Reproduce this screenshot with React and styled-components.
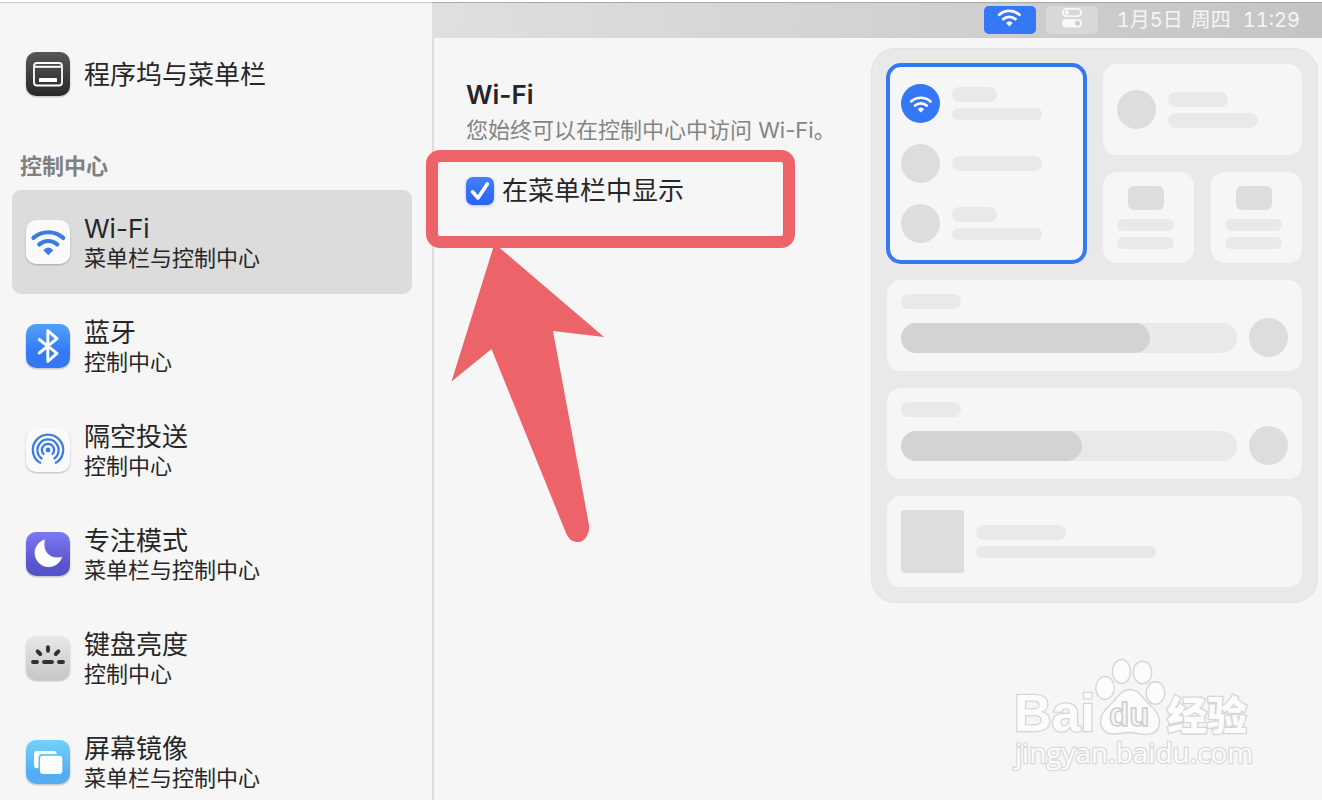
import * as React from "react";
import styled, { createGlobalStyle } from "styled-components";

const GlobalStyle = createGlobalStyle`
  * {
    box-sizing: border-box;
  }

  body {
    margin: 0;
    background-color: #f6f6f6;
    color: #262626;
    font-family: "Inter", "Noto Sans CJK SC", sans-serif;
  }
`;

const Window = styled.div`
  height: 100vh;
  display: flex;
  overflow: hidden;
  border-top: 2px solid #ffffff;
  background-color: #f6f6f6;
`;

const Sidebar = styled.nav`
  width: 434px;
  flex-shrink: 0;
  padding: 19px 20px 0 12px;
  border-top: 1px solid #cccccc;
  border-right: 2px solid #dcdcdc;
`;

const SectionTitle = styled.h2`
  margin: 0;
  padding: 25px 8px 9px;
  color: #808080;
  font-size: 22px;
  font-weight: 700;
  line-height: 30px;
`;

const Item = styled.button`
  width: 100%;
  height: 104px;
  display: flex;
  align-items: center;
  gap: 14px;
  padding: 0 14px;
  border: 0;
  border-radius: 9px;
  background-color: ${({ $selected }) => ($selected ? "#dcdcdc" : "transparent")};
  color: inherit;
  font-family: inherit;
  text-align: left;
`;

const ItemIcon = styled.span`
  width: 44px;
  height: 44px;
  flex-shrink: 0;
  border-radius: 10px;
  background: ${({ $fill }) => $fill};
  box-shadow: 0 1px 2px rgba(0, 0, 0, 0.25);
  color: #3a7ce0;

  svg {
    display: block;
  }
`;

const ItemText = styled.span`
  display: flex;
  flex-direction: column;
  padding-top: 2px;
`;

const ItemTitle = styled.span`
  font-size: 26px;
  line-height: 30px;
`;

const ItemSubtitle = styled.span`
  font-size: 22px;
  line-height: 28px;
`;

const Main = styled.main`
  flex: 1;
  min-width: 0;
  position: relative;
`;

const MenuBar = styled.header`
  height: 36px;
  margin-left: -2px;
  display: flex;
  align-items: flex-start;
  justify-content: flex-end;
  gap: 10px;
  padding: 3px 22px 0 0;
  border-top: 1px solid #a8a8a8;
  background: linear-gradient(100deg, #dfdfdf, #d2d2d2 50%, #c4c4c4);
`;

const MenuButton = styled.button`
  width: 52px;
  height: 28px;
  display: flex;
  align-items: flex-start;
  justify-content: center;
  padding: 2px 0 0;
  border: 0;
  border-radius: 5px;
  background-color: ${({ $active }) => ($active ? "#3478f6" : "#d8d8d8")};
  color: #f8f8f8;
`;

const Clock = styled.time`
  display: flex;
  gap: 8px;
  margin-left: 9px;
  color: #f6f6f6;
  font-size: 20px;
  font-variant-numeric: tabular-nums;
  line-height: 28px;
`;

const ClockTime = styled.span`
  margin-left: 4px;
`;

const Content = styled.div`
  display: flex;
  align-items: flex-start;
  justify-content: space-between;
  padding: 10px 4px 0 32px;
`;

const Settings = styled.section`
  padding-top: 32px;
`;

const Title = styled.h1`
  margin: 0;
  font-size: 26px;
  font-weight: 600;
  line-height: 30px;
`;

const Description = styled.p`
  margin: 6px 0 32px;
  color: #848484;
  font-size: 22px;
  line-height: 28px;
`;

const CheckRow = styled.div`
  position: relative;
  display: flex;
  align-items: center;
  gap: 8px;
`;

const CheckLabel = styled.label`
  font-size: 26px;
  line-height: 30px;
`;

const CheckBox = styled.span`
  display: grid;

  > * {
    grid-area: 1 / 1;
  }

  svg {
    pointer-events: none;
  }

  input:not(:checked) + svg {
    visibility: hidden;
  }
`;

const CheckInput = styled.input`
  appearance: none;
  width: 28px;
  height: 28px;
  margin: 0;
  border: 1px solid #c4c4c4;
  border-radius: 7px;
  background-color: #ffffff;

  &:checked {
    border: 0;
    background: linear-gradient(#4380f8, #2a62f5);
    box-shadow: 0 1px 3px rgba(42, 98, 245, 0.35);
  }
`;

const Highlight = styled.div`
  position: absolute;
  top: -26px;
  left: -40px;
  width: 369px;
  height: 98px;
  border: 12px solid #ec646a;
  border-radius: 14px;
  pointer-events: none;
`;

const Arrow = styled.svg`
  position: absolute;
  top: 64px;
  left: -16px;
  pointer-events: none;
`;

const Panel = styled.aside`
  width: 447px;
  flex-shrink: 0;
  display: grid;
  grid-template-columns: repeat(4, 1fr);
  grid-auto-rows: 91px;
  gap: 17px;
  padding: 15px;
  border: 1px solid #e3e3e3;
  border-radius: 24px;
  background-color: #e9e9e9;
`;

const Card = styled.div`
  grid-column: span ${({ $cols }) => $cols};
  grid-row: span ${({ $rows }) => $rows || 1};
  display: flex;
  flex-direction: ${({ $column }) => ($column ? "column" : "row")};
  align-items: ${({ $column }) => ($column ? "stretch" : "center")};
  gap: ${({ $gap }) => $gap || 12}px;
  padding: 14px;
  border-radius: 14px;
  background-color: #f6f6f6;
`;

const SelectedCard = styled(Card)`
  justify-content: center;
  margin: -1px;
  padding: 11px;
  border: 4px solid #3478f6;
  border-radius: 15px;
`;

const CardRow = styled.div`
  display: flex;
  align-items: center;
  gap: 12px;
`;

const Lines = styled.div`
  display: flex;
  flex-direction: column;
  align-items: ${({ $center }) => ($center ? "center" : "flex-start")};
  gap: 6px;
`;

const Bar = styled.div`
  width: ${({ $width }) => $width}px;
  height: ${({ $thin }) => ($thin ? 12 : 15)}px;
  border-radius: 8px;
  background-color: #e9e9e9;
`;

const Dot = styled.div`
  width: 39px;
  height: 39px;
  flex-shrink: 0;
  display: flex;
  align-items: center;
  justify-content: center;
  border-radius: 50%;
  background-color: ${({ $active }) => ($active ? "#3478f6" : "#dddddd")};
  color: #ffffff;
`;

const Tile = styled.div`
  width: 36px;
  height: 24px;
  margin-bottom: 3px;
  border-radius: 6px;
  background-color: #dddddd;
`;

const Cover = styled.div`
  width: 63px;
  height: 63px;
  border-radius: 3px;
  background-color: #dddddd;
`;

const Track = styled.div`
  flex: 1;
  height: 30px;
  border-radius: 15px;
  background-color: #e9e9e9;
`;

const TrackFill = styled.div`
  height: 100%;
  border-radius: 15px;
  background-color: #d3d3d3;
`;

const Watermark = styled.svg`
  position: absolute;
  right: 62px;
  bottom: 20px;
  pointer-events: none;
`;

const WifiIcon = ({ width, height, viewBox = "4 8 37 28" }) => (
  <svg
    width={width}
    height={height}
    viewBox={viewBox}
    fill="none"
    stroke="currentColor"
    strokeWidth="4.2"
    strokeLinecap="round"
  >
    <path d="M7.4 17.9A22.5 22.5 0 0 1 37.2 17.9" />
    <path d="M13.3 24.4A13.6 13.6 0 0 1 31.3 24.4" />
    <path d="M22.3 35.2L17.3 30.2Q22.3 25 27.3 30.2Z" fill="currentColor" stroke="none" />
  </svg>
);

const TogglesIcon = () => (
  <svg width="20" height="20" viewBox="0 0 20 20">
    <rect x="0.9" y="0.9" width="18.2" height="7.2" rx="3.6" fill="none" stroke="currentColor" strokeWidth="1.8" />
    <circle cx="5" cy="4.5" r="2.3" fill="currentColor" />
    <rect x="0" y="11" width="20" height="8.6" rx="4.3" fill="currentColor" />
    <circle cx="15.5" cy="15.3" r="2.5" fill="#cfcfcf" />
  </svg>
);

const DockIcon = () => (
  <svg width="44" height="44" fill="none" stroke="#ffffff" strokeWidth="1.8">
    <rect x="8" y="11" width="28" height="22.5" rx="3" />
    <path d="M8 14.8H36" strokeWidth="2" />
    <rect x="13" y="26" width="18" height="4" rx="0.6" fill="#ffffff" stroke="none" />
  </svg>
);

const BluetoothIcon = () => (
  <svg width="44" height="44" fill="none" stroke="#ffffff" strokeWidth="2.9" strokeLinecap="round" strokeLinejoin="round">
    <path d="M13.3 15.5L31 29.3L21.8 37.3V6.7L31 14.7L13.3 29" />
  </svg>
);

const AirDropIcon = () => (
  <svg width="44" height="44" fill="none" stroke="#3a7ce0" strokeWidth="2.3">
    <circle cx="22" cy="22" r="2.4" fill="#3a7ce0" stroke="none" />
    <path d="M15 35.3A15.2 15.2 0 1 1 29 35.3" />
    <path d="M16.3 31A10.6 10.6 0 1 1 27.7 31" />
    <path d="M18.2 26.7A6.1 6.1 0 1 1 25.8 26.7" />
  </svg>
);

const MoonIcon = () => (
  <svg width="44" height="44">
    <path
      d="M18.6 7.8A13.8 13.8 0 1 0 35.8 25.3C29 26.6 25 25.3 21.6 21.8C18.2 18.2 17.4 13.5 18.6 7.8Z"
      fill="#ffffff"
      stroke="#ffffff"
      strokeWidth="0.6"
      strokeLinejoin="round"
    />
  </svg>
);

const BacklightIcon = () => (
  <svg width="44" height="44" fill="none" stroke="#303030" strokeWidth="3.9" strokeLinecap="round">
    <path d="M7 26H11M18 26H26M33 26H37" />
    <path d="M22 11.2V14.8M11.6 15.4L14.2 18M32.4 15.4L29.8 18" />
  </svg>
);

const MirrorIcon = () => (
  <svg width="44" height="44" fill="#ffffff">
    <path d="M11 11H28Q30.4 11 30.7 14H16Q12.5 14 12.5 17.5V28.3H11Q8 28.3 8 25.3V14Q8 11 11 11Z" />
    <rect x="14" y="15.7" width="22.3" height="18.3" rx="3" />
  </svg>
);

const controlItems = [
  {
    title: "Wi-Fi",
    subtitle: "菜单栏与控制中心",
    fill: "#fafafa",
    icon: <WifiIcon width={44} height={44} viewBox="0 0 44 44" />,
    selected: true
  },
  {
    title: "蓝牙",
    subtitle: "控制中心",
    fill: "linear-gradient(#52a0f8, #3478f6 65%)",
    icon: <BluetoothIcon />
  },
  {
    title: "隔空投送",
    subtitle: "控制中心",
    fill: "#fafafa",
    icon: <AirDropIcon />
  },
  {
    title: "专注模式",
    subtitle: "菜单栏与控制中心",
    fill: "linear-gradient(#7d78f5, #5854ca 75%)",
    icon: <MoonIcon />
  },
  {
    title: "键盘亮度",
    subtitle: "控制中心",
    fill: "linear-gradient(#e8e8e8, #c6c6ca)",
    icon: <BacklightIcon />
  },
  {
    title: "屏幕镜像",
    subtitle: "菜单栏与控制中心",
    fill: "linear-gradient(#74d2f8, #54adf3 75%)",
    icon: <MirrorIcon />
  }
];

const SidebarItem = ({ title, subtitle, fill, icon, selected }) => (
  <Item type="button" $selected={selected}>
    <ItemIcon $fill={fill}>{icon}</ItemIcon>
    <ItemText>
      <ItemTitle>{title}</ItemTitle>
      {subtitle && <ItemSubtitle>{subtitle}</ItemSubtitle>}
    </ItemText>
  </Item>
);

const SliderCard = ({ value }) => (
  <Card $cols={4} $column $gap={9}>
    <Bar $width={60} />
    <CardRow>
      <Track>
        <TrackFill style={{ width: `${value}%` }} />
      </Track>
      <Dot />
    </CardRow>
  </Card>
);

const SmallCard = () => (
  <Card $cols={1}>
    <Lines $center>
      <Tile />
      <Bar $width={57} $thin />
      <Bar $width={57} $thin />
    </Lines>
  </Card>
);

const ControlCenterPreview = () => (
  <Panel>
    <SelectedCard $cols={2} $rows={2} $column $gap={21}>
      <CardRow>
        <Dot $active>
          <WifiIcon width={24} height={18} />
        </Dot>
        <Lines>
          <Bar $width={45} />
          <Bar $width={90} $thin />
        </Lines>
      </CardRow>
      <CardRow>
        <Dot />
        <Bar $width={90} />
      </CardRow>
      <CardRow>
        <Dot />
        <Lines>
          <Bar $width={45} />
          <Bar $width={90} $thin />
        </Lines>
      </CardRow>
    </SelectedCard>
    <Card $cols={2}>
      <Dot />
      <Lines>
        <Bar $width={60} />
        <Bar $width={90} />
      </Lines>
    </Card>
    <SmallCard />
    <SmallCard />
    <SliderCard value={74} />
    <SliderCard value={54} />
    <Card $cols={4}>
      <Cover />
      <Lines>
        <Bar $width={90} />
        <Bar $width={180} $thin />
      </Lines>
    </Card>
  </Panel>
);

const BaiduWatermark = () => (
  <Watermark width="250" height="130" viewBox="0 0 250 130" fill="#fcfcfc" stroke="#d6d6d6" strokeWidth="1.4">
    <g fontFamily="Liberation Sans, sans-serif" fontWeight="700" paintOrder="stroke" strokeWidth="2.6">
      <text x="4" y="81" fontSize="52">
        Bai
      </text>
      <text x="157" y="80" fontSize="40" fontWeight="900" fontFamily="Noto Sans CJK SC, sans-serif">
        经验
      </text>
    </g>
    <ellipse cx="95" cy="38" rx="9.3" ry="11.5" />
    <ellipse cx="111.5" cy="21.5" rx="9" ry="12" />
    <ellipse cx="132.5" cy="22.5" rx="9.3" ry="11.3" />
    <ellipse cx="145.5" cy="43" rx="9.3" ry="11.3" />
    <path d="M120 39.5C129 39.5 132 48 139 54C146 60 149.5 65 149.5 72C149.5 80 144 84.5 136 84.5C129 84.5 126 82.5 120 82.5C113 82.5 110 84 103 84C95 84 90.5 78 90.5 72C90.5 64 95 60 101 54C108 47 111 39.5 120 39.5Z" />
    <text x="99" y="76" fontSize="33" fontFamily="Liberation Sans, sans-serif" fontWeight="700" fill="#f4f4f4" stroke="#cccccc">
      du
    </text>
    <text x="5" y="113" fontSize="28" fontFamily="Open Sans, sans-serif" paintOrder="stroke" stroke="#dadada" strokeWidth="2.6">
      jingyan.baidu.com
    </text>
  </Watermark>
);

const App = () => {
  const [shown, setShown] = React.useState(true);

  return (
    <Window>
      <GlobalStyle />
      <Sidebar>
        <SidebarItem title="程序坞与菜单栏" fill="linear-gradient(#555658, #29292b)" icon={<DockIcon />} />
        <SectionTitle>控制中心</SectionTitle>
        {controlItems.map(item => (
          <SidebarItem key={item.title} {...item} />
        ))}
      </Sidebar>
      <Main>
        <MenuBar>
          <MenuButton type="button" aria-label="Wi-Fi" $active>
            <WifiIcon width={25} height={19} />
          </MenuButton>
          <MenuButton type="button" aria-label="控制中心">
            <TogglesIcon />
          </MenuButton>
          <Clock>
            <span>1月5日</span>
            <span>周四</span>
            <ClockTime>11:29</ClockTime>
          </Clock>
        </MenuBar>
        <Content>
          <Settings>
            <Title>Wi-Fi</Title>
            <Description>您始终可以在控制中心中访问 Wi-Fi。</Description>
            <CheckRow>
              <CheckBox>
                <CheckInput
                  id="show-in-menu-bar"
                  type="checkbox"
                  checked={shown}
                  onChange={e => setShown(e.target.checked)}
                />
                <svg
                  width="28"
                  height="28"
                  fill="none"
                  stroke="#ffffff"
                  strokeWidth="3.6"
                  strokeLinecap="round"
                  strokeLinejoin="round"
                >
                  <path d="M6.5 14.8L12 21L21.3 7" />
                </svg>
              </CheckBox>
              <CheckLabel htmlFor="show-in-menu-bar">在菜单栏中显示</CheckLabel>
              <Highlight />
              <Arrow width="156" height="304" viewBox="0 0 156 304" fill="#ec646a">
                <path d="M44.5 3.5L154 97L103 91L139 285C140 295 134 302 128 302C123 302 119 300 116 293L41.5 109L1.5 141.5Z" />
              </Arrow>
            </CheckRow>
          </Settings>
          <ControlCenterPreview />
        </Content>
        <BaiduWatermark />
      </Main>
    </Window>
  );
};

export default App;
